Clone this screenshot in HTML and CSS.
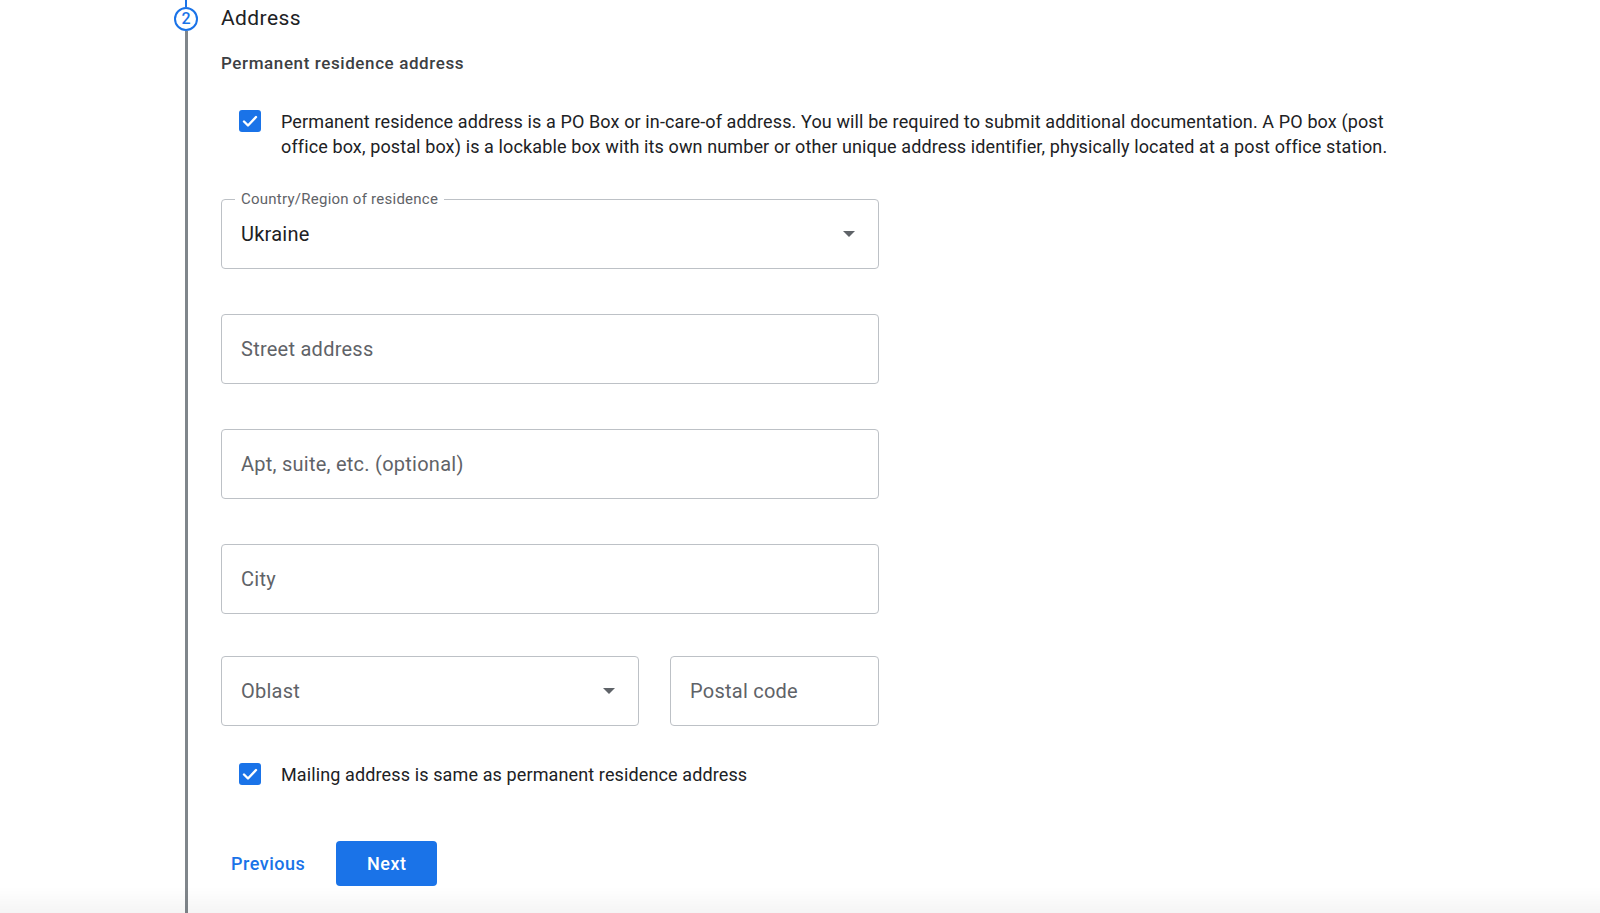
FILE: index.html
```html
<!DOCTYPE html>
<html lang="en">
  <head>
    <meta charset="UTF-8" />
    <meta name="viewport" content="width=device-width, initial-scale=1.0" />
    <title>Address</title>
    <link rel="stylesheet" href="styles.css">
  </head>
  <body>
    <div class="step">
      <!-- Stepper rail -->
      <div class="rail">
        <span class="rail-top"></span>
        <span class="step-num">2</span>
        <span class="rail-line"></span>
      </div>

      <div class="step-body">
        <h2 class="step-title">Address</h2>
        <div class="section-label">Permanent residence address</div>

        <label class="check-row check-po">
          <span class="checkbox">
            <svg viewBox="0 0 22 22" width="22" height="22">
              <path d="M5 11.5l4 4 8-8.5" fill="none" stroke="#fff" stroke-width="2.4" stroke-linecap="round" stroke-linejoin="round"/>
            </svg>
          </span>
          <span class="check-text">Permanent residence address is a PO Box or in-care-of address. You will be required to submit additional documentation. A PO box (post office box, postal box) is a lockable box with its own number or other unique address identifier, physically located at a post office station.</span>
        </label>

        <div class="field field-select field-country">
          <span class="field-label">Country/Region of residence</span>
          <span class="field-value">Ukraine</span>
          <span class="caret"></span>
        </div>

        <div class="field">
          <span class="placeholder">Street address</span>
        </div>

        <div class="field">
          <span class="placeholder">Apt, suite, etc. (optional)</span>
        </div>

        <div class="field">
          <span class="placeholder">City</span>
        </div>

        <div class="field-row">
          <div class="field field-select field-oblast">
            <span class="placeholder">Oblast</span>
            <span class="caret"></span>
          </div>
          <div class="field field-postal">
            <span class="placeholder">Postal code</span>
          </div>
        </div>

        <label class="check-row check-mailing">
          <span class="checkbox">
            <svg viewBox="0 0 22 22" width="22" height="22">
              <path d="M5 11.5l4 4 8-8.5" fill="none" stroke="#fff" stroke-width="2.4" stroke-linecap="round" stroke-linejoin="round"/>
            </svg>
          </span>
          <span class="check-text">Mailing address is same as permanent residence address</span>
        </label>

        <div class="actions">
          <button type="button" class="btn-text">Previous</button>
          <button type="button" class="btn-primary">Next</button>
        </div>
      </div>
    </div>

    <div class="bottom-fade"></div>
  </body>
</html>
```

FILE: styles.css
```css
/* Global Styles */
body {
  font-family: "Roboto", "Liberation Sans", sans-serif;
  background-color: #fff;
  margin: 0;
  padding: 0;
  color: #202124;
  height: 913px;
  overflow: hidden;
}

.step {
  display: flex;
  height: 100%;
}

/* Stepper rail */
.rail {
  width: 24px;
  margin-left: 174px;
  display: flex;
  flex-direction: column;
  align-items: center;
}

.rail-top {
  width: 2px;
  height: 7px;
  background-color: #1a73e8;
}

.rail-line {
  flex: 1;
  width: 3px;
  background-color: #80868b;
}

.step-num {
  width: 24px;
  height: 24px;
  box-sizing: border-box;
  border: 2px solid #1a73e8;
  border-radius: 50%;
  color: #1a73e8;
  font-size: 16px;
  font-weight: 500;
  line-height: 20px;
  text-align: center;
}

.step-body {
  margin-left: 23px;
  width: 1180px;
}

.step-title {
  margin: 0;
  font-size: 21px;
  font-weight: 400;
  line-height: 36px;
  letter-spacing: 0.4px;
  color: #202124;
}

.section-label {
  margin-top: 15px;
  font-size: 17px;
  font-weight: 500;
  line-height: 24px;
  letter-spacing: 0.6px;
  color: #3c4043;
}

/* Checkbox rows */
.check-row {
  display: flex;
  align-items: flex-start;
  padding-left: 18px;
}

.check-po {
  margin-top: 34px;
}

.check-mailing {
  margin-top: 36px;
}

.checkbox {
  flex: none;
  width: 22px;
  height: 22px;
  margin-top: 1px;
  margin-right: 20px;
  border-radius: 3px;
  background-color: #1a73e8;
}

.checkbox svg {
  display: block;
}

.check-text {
  font-size: 18px;
  line-height: 25px;
  letter-spacing: 0.12px;
  color: #202124;
}

/* Outlined fields */
.field {
  position: relative;
  display: flex;
  align-items: center;
  justify-content: space-between;
  box-sizing: border-box;
  width: 658px;
  height: 70px;
  margin-top: 45px;
  padding: 0 23px 0 19px;
  border: 1px solid #bdc1c6;
  border-radius: 4px;
  font-size: 20px;
  letter-spacing: 0.25px;
}

.field-country {
  margin-top: 40px;
}

.field-label {
  position: absolute;
  top: -10px;
  left: 13px;
  padding: 0 6px;
  background-color: #fff;
  font-size: 15px;
  line-height: 18px;
  letter-spacing: 0.25px;
  color: #5f6368;
}

.field-value {
  color: #202124;
}

.placeholder {
  color: #5f6368;
}

.caret {
  width: 0;
  height: 0;
  border-left: 6px solid transparent;
  border-right: 6px solid transparent;
  border-top: 6px solid #5f6368;
}

.field-row {
  display: flex;
  gap: 31px;
  width: 658px;
  margin-top: 42px;
}

.field-row .field {
  margin-top: 0;
}

.field-oblast {
  width: 418px;
}

.field-postal {
  width: 209px;
}

/* Buttons */
.actions {
  display: flex;
  gap: 21px;
  margin-top: 54px;
}

.actions button {
  height: 45px;
  border: none;
  border-radius: 4px;
  font-family: inherit;
  font-size: 18px;
  font-weight: 500;
  letter-spacing: 0.5px;
  cursor: pointer;
}

.btn-text {
  padding: 0 10px;
  background: none;
  color: #1a73e8;
}

.btn-primary {
  width: 101px;
  background-color: #1a73e8;
  color: #fff;
}

.bottom-fade {
  position: fixed;
  left: 0;
  right: 0;
  bottom: 0;
  height: 26px;
  background: linear-gradient(rgba(0, 0, 0, 0), rgba(0, 0, 0, 0.04));
  pointer-events: none;
}
```
